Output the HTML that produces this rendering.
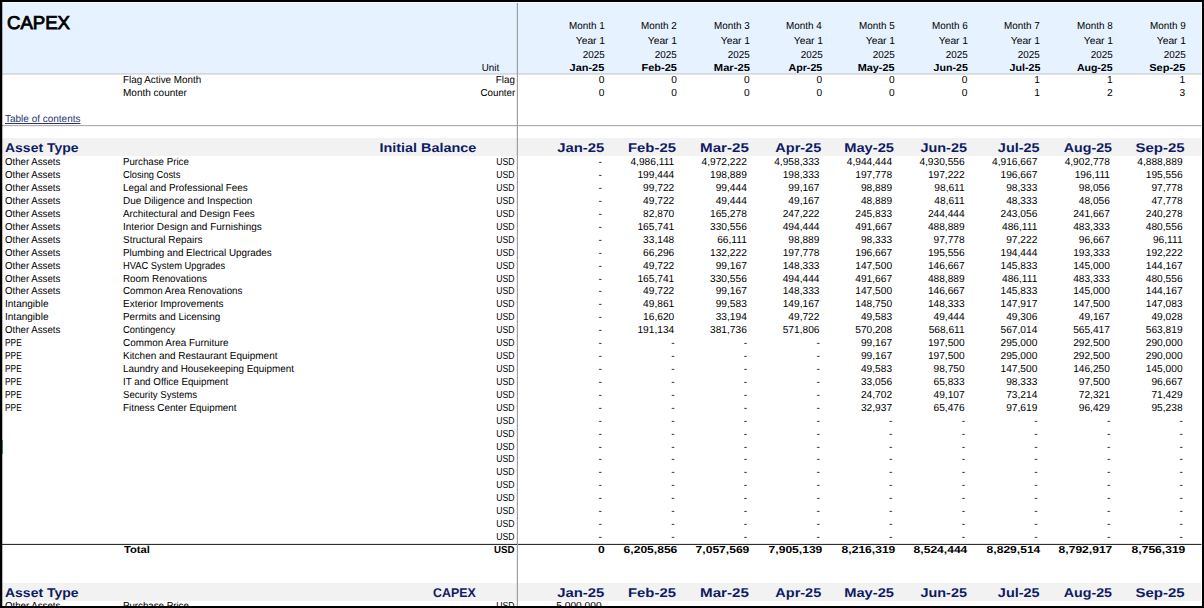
<!DOCTYPE html>
<html lang="en">
<head>
<meta charset="utf-8">
<title>CAPEX</title>
<style>
html,body{margin:0;padding:0;background:#fff;}
body{width:1204px;height:608px;position:relative;overflow:hidden;font-family:"Liberation Sans",sans-serif;color:#000;}
#sheet{position:absolute;left:0;top:0;width:1204px;height:608px;overflow:hidden;background:#fff;}
.hdr{position:absolute;left:2px;top:2px;width:1200px;height:71px;background:#e6f2ff;border-bottom:1px solid #d3d8de;}
.hdr2{position:absolute;left:2px;top:74px;width:1200px;height:1px;background:#e4e4e2;}
.band{position:absolute;left:2px;width:1200px;background:#f2f2f2;}
.vline{position:absolute;left:517px;top:2px;width:1px;height:604px;background:#a0a0a0;box-shadow:-1px 0 0 rgba(0,0,0,0.07);}
.hline{position:absolute;left:2px;top:125px;width:1200px;height:1px;background:#acacac;box-shadow:0 1px 0 rgba(0,0,0,0.05);}
.tline{position:absolute;left:2px;top:544px;width:1200px;height:1px;background:#303030;box-shadow:0 -1px 0 rgba(0,0,0,0.09);}
.bt,.bb,.bl,.br{position:absolute;background:#000;}
.bt{left:0;top:0;width:1204px;height:2px;}
.bb{left:0;top:606px;width:1204px;height:2px;}
.bl{left:0;top:0;width:2px;height:608px;}
.br{left:1202px;top:0;width:2px;height:608px;}
.bl2{position:absolute;left:2px;top:2px;width:1px;height:604px;background:rgba(0,0,0,0.27);}
.bt2{position:absolute;left:2px;top:2px;width:1200px;height:1px;background:#f2fbff;}
.br2{position:absolute;left:1201px;top:2px;width:1px;height:604px;background:rgba(255,255,255,0.55);}
.sel{position:absolute;left:2px;top:440px;width:1px;height:14px;background:#2a8757;}
.t{position:absolute;white-space:nowrap;height:13px;line-height:13px;font-size:10.2px;text-rendering:geometricPrecision;}
.l{transform-origin:left center;}
.r{transform-origin:right center;text-align:right;}
.n{transform:scaleX(1.0);}
.x{transform:scaleX(0.96);}
.u{transform:scaleX(0.85);}
.ub{font-weight:bold;transform:scaleX(0.953);}
.nb{font-weight:bold;transform:scaleX(1.185);}
.tb{font-weight:bold;transform:scaleX(1.016);}
.h{transform:scaleX(0.97);}
.hy{transform:scaleX(1.007);}
.hb{font-weight:bold;transform:scaleX(1.075);}
.s{font-size:12.7px;font-weight:bold;color:#0d1a64;height:17px;line-height:17px;transform:scaleX(1.17);}
.st{transform:scaleX(1.115);}
.ttl{font-size:18.5px;height:24px;line-height:24px;-webkit-text-stroke:0.85px #000;}
.lnk{color:#27356f;text-decoration:underline;}
</style>
</head>
<body>
<div id="sheet">
<div class="hdr"></div><div class="hdr2"></div>
<div class="band" style="top:138px;height:18px"></div>
<div class="band" style="top:583px;height:18px"></div>

<div class="t l ttl" style="left:6.97px;top:11.4px;transform:scaleX(1.0047)">CAPEX</div>
<div class="t r x" style="right:704.7px;top:62px">Unit</div>
<div class="t r h" style="right:599.6px;top:19.5px">Month 1</div>
<div class="t r h hy" style="right:599.2px;top:34.7px">Year 1</div>
<div class="t r h" style="right:599.6px;top:48.5px">2025</div>
<div class="t r hb" style="right:599.6px;top:61.5px;transform:scaleX(1.0750)">Jan-25</div>
<div class="t r h" style="right:526.98px;top:19.5px">Month 2</div>
<div class="t r h hy" style="right:526.58px;top:34.7px">Year 1</div>
<div class="t r h" style="right:526.98px;top:48.5px">2025</div>
<div class="t r hb" style="right:526.98px;top:61.5px;transform:scaleX(1.0750)">Feb-25</div>
<div class="t r h" style="right:454.36px;top:19.5px">Month 3</div>
<div class="t r h hy" style="right:453.96px;top:34.7px">Year 1</div>
<div class="t r h" style="right:454.36px;top:48.5px">2025</div>
<div class="t r hb" style="right:454.36px;top:61.5px;transform:scaleX(1.0965)">Mar-25</div>
<div class="t r h" style="right:381.74px;top:19.5px">Month 4</div>
<div class="t r h hy" style="right:381.34px;top:34.7px">Year 1</div>
<div class="t r h" style="right:381.74px;top:48.5px">2025</div>
<div class="t r hb" style="right:381.74px;top:61.5px;transform:scaleX(1.0481)">Apr-25</div>
<div class="t r h" style="right:309.12px;top:19.5px">Month 5</div>
<div class="t r h hy" style="right:308.72px;top:34.7px">Year 1</div>
<div class="t r h" style="right:309.12px;top:48.5px">2025</div>
<div class="t r hb" style="right:309.12px;top:61.5px;transform:scaleX(1.0642)">May-25</div>
<div class="t r h" style="right:236.5px;top:19.5px">Month 6</div>
<div class="t r h hy" style="right:236.1px;top:34.7px">Year 1</div>
<div class="t r h" style="right:236.5px;top:48.5px">2025</div>
<div class="t r hb" style="right:236.5px;top:61.5px;transform:scaleX(1.0427)">Jun-25</div>
<div class="t r h" style="right:163.88px;top:19.5px">Month 7</div>
<div class="t r h hy" style="right:163.48px;top:34.7px">Year 1</div>
<div class="t r h" style="right:163.88px;top:48.5px">2025</div>
<div class="t r hb" style="right:163.88px;top:61.5px;transform:scaleX(1.0481)">Jul-25</div>
<div class="t r h" style="right:91.26px;top:19.5px">Month 8</div>
<div class="t r h hy" style="right:90.86px;top:34.7px">Year 1</div>
<div class="t r h" style="right:91.26px;top:48.5px">2025</div>
<div class="t r hb" style="right:91.26px;top:61.5px;transform:scaleX(1.0320)">Aug-25</div>
<div class="t r h" style="right:18.64px;top:19.5px">Month 9</div>
<div class="t r h hy" style="right:18.24px;top:34.7px">Year 1</div>
<div class="t r h" style="right:18.64px;top:48.5px">2025</div>
<div class="t r hb" style="right:18.64px;top:61.5px;transform:scaleX(1.0857)">Sep-25</div>
<div class="t l " style="left:123.01px;top:73.5px;transform:scaleX(0.9647)">Flag Active Month</div>
<div class="t r x" style="right:689px;top:73.5px">Flag</div>
<div class="t l " style="left:123px;top:86.5px;transform:scaleX(0.9819)">Month counter</div>
<div class="t r x" style="right:689px;top:86.5px">Counter</div>
<div class="t r n" style="right:599.7px;top:73.5px">0</div>
<div class="t r n" style="right:599.7px;top:86.5px">0</div>
<div class="t r n" style="right:527.08px;top:73.5px">0</div>
<div class="t r n" style="right:527.08px;top:86.5px">0</div>
<div class="t r n" style="right:454.46px;top:73.5px">0</div>
<div class="t r n" style="right:454.46px;top:86.5px">0</div>
<div class="t r n" style="right:381.84px;top:73.5px">0</div>
<div class="t r n" style="right:381.84px;top:86.5px">0</div>
<div class="t r n" style="right:309.22px;top:73.5px">0</div>
<div class="t r n" style="right:309.22px;top:86.5px">0</div>
<div class="t r n" style="right:236.6px;top:73.5px">0</div>
<div class="t r n" style="right:236.6px;top:86.5px">0</div>
<div class="t r n" style="right:163.98px;top:73.5px">1</div>
<div class="t r n" style="right:163.98px;top:86.5px">1</div>
<div class="t r n" style="right:91.36px;top:73.5px">1</div>
<div class="t r n" style="right:91.36px;top:86.5px">2</div>
<div class="t r n" style="right:18.74px;top:73.5px">1</div>
<div class="t r n" style="right:18.74px;top:86.5px">3</div>
<div class="t l lnk" style="left:4.8px;top:113px;transform:scaleX(0.9797)">Table of contents</div>
<div class="t l s" style="left:5.25px;top:139.6px;transform:scaleX(1.1013)">Asset Type</div>
<div class="t r s" style="right:727.47px;top:139.6px;transform:scaleX(1.1354)">Initial Balance</div>
<div class="t r s" style="right:600.3px;top:139.6px;transform:scaleX(1.1700)">Jan-25</div>
<div class="t r s" style="right:527.68px;top:139.6px;transform:scaleX(1.1700)">Feb-25</div>
<div class="t r s" style="right:455.06px;top:139.6px;transform:scaleX(1.1934)">Mar-25</div>
<div class="t r s" style="right:382.44px;top:139.6px;transform:scaleX(1.1407)">Apr-25</div>
<div class="t r s" style="right:309.82px;top:139.6px;transform:scaleX(1.1583)">May-25</div>
<div class="t r s" style="right:237.2px;top:139.6px;transform:scaleX(1.1349)">Jun-25</div>
<div class="t r s" style="right:164.58px;top:139.6px;transform:scaleX(1.1407)">Jul-25</div>
<div class="t r s" style="right:91.96px;top:139.6px;transform:scaleX(1.1232)">Aug-25</div>
<div class="t r s" style="right:19.34px;top:139.6px;transform:scaleX(1.1817)">Sep-25</div>
<div class="t l " style="left:4.66px;top:156.2px;transform:scaleX(0.9483)">Other Assets</div>
<div class="t l " style="left:123.12px;top:156.2px;transform:scaleX(0.9524)">Purchase Price</div>
<div class="t r u" style="right:689px;top:156.2px">USD</div>
<div class="t r n" style="right:602px;top:156.2px">-</div>
<div class="t r n" style="right:529.78px;top:156.2px">4,986,111</div>
<div class="t r n" style="right:457.16px;top:156.2px">4,972,222</div>
<div class="t r n" style="right:384.54px;top:156.2px">4,958,333</div>
<div class="t r n" style="right:311.92px;top:156.2px">4,944,444</div>
<div class="t r n" style="right:239.3px;top:156.2px">4,930,556</div>
<div class="t r n" style="right:166.68px;top:156.2px">4,916,667</div>
<div class="t r n" style="right:94.06px;top:156.2px">4,902,778</div>
<div class="t r n" style="right:21.44px;top:156.2px">4,888,889</div>
<div class="t l " style="left:4.66px;top:169.12px;transform:scaleX(0.9483)">Other Assets</div>
<div class="t l " style="left:123.43px;top:169.12px;transform:scaleX(0.9119)">Closing Costs</div>
<div class="t r u" style="right:689px;top:169.12px">USD</div>
<div class="t r n" style="right:602px;top:169.12px">-</div>
<div class="t r n" style="right:529.78px;top:169.12px">199,444</div>
<div class="t r n" style="right:457.16px;top:169.12px">198,889</div>
<div class="t r n" style="right:384.54px;top:169.12px">198,333</div>
<div class="t r n" style="right:311.92px;top:169.12px">197,778</div>
<div class="t r n" style="right:239.3px;top:169.12px">197,222</div>
<div class="t r n" style="right:166.68px;top:169.12px">196,667</div>
<div class="t r n" style="right:94.06px;top:169.12px">196,111</div>
<div class="t r n" style="right:21.44px;top:169.12px">195,556</div>
<div class="t l " style="left:4.66px;top:182.05px;transform:scaleX(0.9483)">Other Assets</div>
<div class="t l " style="left:123.11px;top:182.05px;transform:scaleX(0.9656)">Legal and Professional Fees</div>
<div class="t r u" style="right:689px;top:182.05px">USD</div>
<div class="t r n" style="right:602px;top:182.05px">-</div>
<div class="t r n" style="right:529.78px;top:182.05px">99,722</div>
<div class="t r n" style="right:457.16px;top:182.05px">99,444</div>
<div class="t r n" style="right:384.54px;top:182.05px">99,167</div>
<div class="t r n" style="right:311.92px;top:182.05px">98,889</div>
<div class="t r n" style="right:239.3px;top:182.05px">98,611</div>
<div class="t r n" style="right:166.68px;top:182.05px">98,333</div>
<div class="t r n" style="right:94.06px;top:182.05px">98,056</div>
<div class="t r n" style="right:21.44px;top:182.05px">97,778</div>
<div class="t l " style="left:4.66px;top:194.97px;transform:scaleX(0.9483)">Other Assets</div>
<div class="t l " style="left:123.1px;top:194.97px;transform:scaleX(0.9754)">Due Diligence and Inspection</div>
<div class="t r u" style="right:689px;top:194.97px">USD</div>
<div class="t r n" style="right:602px;top:194.97px">-</div>
<div class="t r n" style="right:529.78px;top:194.97px">49,722</div>
<div class="t r n" style="right:457.16px;top:194.97px">49,444</div>
<div class="t r n" style="right:384.54px;top:194.97px">49,167</div>
<div class="t r n" style="right:311.92px;top:194.97px">48,889</div>
<div class="t r n" style="right:239.3px;top:194.97px">48,611</div>
<div class="t r n" style="right:166.68px;top:194.97px">48,333</div>
<div class="t r n" style="right:94.06px;top:194.97px">48,056</div>
<div class="t r n" style="right:21.44px;top:194.97px">47,778</div>
<div class="t l " style="left:4.66px;top:207.9px;transform:scaleX(0.9483)">Other Assets</div>
<div class="t l " style="left:123.3px;top:207.9px;transform:scaleX(0.9657)">Architectural and Design Fees</div>
<div class="t r u" style="right:689px;top:207.9px">USD</div>
<div class="t r n" style="right:602px;top:207.9px">-</div>
<div class="t r n" style="right:529.78px;top:207.9px">82,870</div>
<div class="t r n" style="right:457.16px;top:207.9px">165,278</div>
<div class="t r n" style="right:384.54px;top:207.9px">247,222</div>
<div class="t r n" style="right:311.92px;top:207.9px">245,833</div>
<div class="t r n" style="right:239.3px;top:207.9px">244,444</div>
<div class="t r n" style="right:166.68px;top:207.9px">243,056</div>
<div class="t r n" style="right:94.06px;top:207.9px">241,667</div>
<div class="t r n" style="right:21.44px;top:207.9px">240,278</div>
<div class="t l " style="left:4.66px;top:220.82px;transform:scaleX(0.9483)">Other Assets</div>
<div class="t l " style="left:123px;top:220.82px;transform:scaleX(0.9804)">Interior Design and Furnishings</div>
<div class="t r u" style="right:689px;top:220.82px">USD</div>
<div class="t r n" style="right:602px;top:220.82px">-</div>
<div class="t r n" style="right:529.78px;top:220.82px">165,741</div>
<div class="t r n" style="right:457.16px;top:220.82px">330,556</div>
<div class="t r n" style="right:384.54px;top:220.82px">494,444</div>
<div class="t r n" style="right:311.92px;top:220.82px">491,667</div>
<div class="t r n" style="right:239.3px;top:220.82px">488,889</div>
<div class="t r n" style="right:166.68px;top:220.82px">486,111</div>
<div class="t r n" style="right:94.06px;top:220.82px">483,333</div>
<div class="t r n" style="right:21.44px;top:220.82px">480,556</div>
<div class="t l " style="left:4.66px;top:233.75px;transform:scaleX(0.9483)">Other Assets</div>
<div class="t l " style="left:123.45px;top:233.75px;transform:scaleX(0.9761)">Structural Repairs</div>
<div class="t r u" style="right:689px;top:233.75px">USD</div>
<div class="t r n" style="right:602px;top:233.75px">-</div>
<div class="t r n" style="right:529.78px;top:233.75px">33,148</div>
<div class="t r n" style="right:457.16px;top:233.75px">66,111</div>
<div class="t r n" style="right:384.54px;top:233.75px">98,889</div>
<div class="t r n" style="right:311.92px;top:233.75px">98,333</div>
<div class="t r n" style="right:239.3px;top:233.75px">97,778</div>
<div class="t r n" style="right:166.68px;top:233.75px">97,222</div>
<div class="t r n" style="right:94.06px;top:233.75px">96,667</div>
<div class="t r n" style="right:21.44px;top:233.75px">96,111</div>
<div class="t l " style="left:4.66px;top:246.68px;transform:scaleX(0.9483)">Other Assets</div>
<div class="t l " style="left:123.11px;top:246.68px;transform:scaleX(0.9692)">Plumbing and Electrical Upgrades</div>
<div class="t r u" style="right:689px;top:246.68px">USD</div>
<div class="t r n" style="right:602px;top:246.68px">-</div>
<div class="t r n" style="right:529.78px;top:246.68px">66,296</div>
<div class="t r n" style="right:457.16px;top:246.68px">132,222</div>
<div class="t r n" style="right:384.54px;top:246.68px">197,778</div>
<div class="t r n" style="right:311.92px;top:246.68px">196,667</div>
<div class="t r n" style="right:239.3px;top:246.68px">195,556</div>
<div class="t r n" style="right:166.68px;top:246.68px">194,444</div>
<div class="t r n" style="right:94.06px;top:246.68px">193,333</div>
<div class="t r n" style="right:21.44px;top:246.68px">192,222</div>
<div class="t l " style="left:4.66px;top:259.6px;transform:scaleX(0.9483)">Other Assets</div>
<div class="t l " style="left:123.15px;top:259.6px;transform:scaleX(0.9174)">HVAC System Upgrades</div>
<div class="t r u" style="right:689px;top:259.6px">USD</div>
<div class="t r n" style="right:602px;top:259.6px">-</div>
<div class="t r n" style="right:529.78px;top:259.6px">49,722</div>
<div class="t r n" style="right:457.16px;top:259.6px">99,167</div>
<div class="t r n" style="right:384.54px;top:259.6px">148,333</div>
<div class="t r n" style="right:311.92px;top:259.6px">147,500</div>
<div class="t r n" style="right:239.3px;top:259.6px">146,667</div>
<div class="t r n" style="right:166.68px;top:259.6px">145,833</div>
<div class="t r n" style="right:94.06px;top:259.6px">145,000</div>
<div class="t r n" style="right:21.44px;top:259.6px">144,167</div>
<div class="t l " style="left:4.66px;top:272.52px;transform:scaleX(0.9483)">Other Assets</div>
<div class="t l " style="left:123.11px;top:272.52px;transform:scaleX(0.9675)">Room Renovations</div>
<div class="t r u" style="right:689px;top:272.52px">USD</div>
<div class="t r n" style="right:602px;top:272.52px">-</div>
<div class="t r n" style="right:529.78px;top:272.52px">165,741</div>
<div class="t r n" style="right:457.16px;top:272.52px">330,556</div>
<div class="t r n" style="right:384.54px;top:272.52px">494,444</div>
<div class="t r n" style="right:311.92px;top:272.52px">491,667</div>
<div class="t r n" style="right:239.3px;top:272.52px">488,889</div>
<div class="t r n" style="right:166.68px;top:272.52px">486,111</div>
<div class="t r n" style="right:94.06px;top:272.52px">483,333</div>
<div class="t r n" style="right:21.44px;top:272.52px">480,556</div>
<div class="t l " style="left:4.66px;top:285.45px;transform:scaleX(0.9483)">Other Assets</div>
<div class="t l " style="left:123.41px;top:285.45px;transform:scaleX(0.9582)">Common Area Renovations</div>
<div class="t r u" style="right:689px;top:285.45px">USD</div>
<div class="t r n" style="right:602px;top:285.45px">-</div>
<div class="t r n" style="right:529.78px;top:285.45px">49,722</div>
<div class="t r n" style="right:457.16px;top:285.45px">99,167</div>
<div class="t r n" style="right:384.54px;top:285.45px">148,333</div>
<div class="t r n" style="right:311.92px;top:285.45px">147,500</div>
<div class="t r n" style="right:239.3px;top:285.45px">146,667</div>
<div class="t r n" style="right:166.68px;top:285.45px">145,833</div>
<div class="t r n" style="right:94.06px;top:285.45px">145,000</div>
<div class="t r n" style="right:21.44px;top:285.45px">144,167</div>
<div class="t l " style="left:5px;top:298.38px;transform:scaleX(0.9839)">Intangible</div>
<div class="t l " style="left:123.1px;top:298.38px;transform:scaleX(0.9819)">Exterior Improvements</div>
<div class="t r u" style="right:689px;top:298.38px">USD</div>
<div class="t r n" style="right:602px;top:298.38px">-</div>
<div class="t r n" style="right:529.78px;top:298.38px">49,861</div>
<div class="t r n" style="right:457.16px;top:298.38px">99,583</div>
<div class="t r n" style="right:384.54px;top:298.38px">149,167</div>
<div class="t r n" style="right:311.92px;top:298.38px">148,750</div>
<div class="t r n" style="right:239.3px;top:298.38px">148,333</div>
<div class="t r n" style="right:166.68px;top:298.38px">147,917</div>
<div class="t r n" style="right:94.06px;top:298.38px">147,500</div>
<div class="t r n" style="right:21.44px;top:298.38px">147,083</div>
<div class="t l " style="left:5px;top:311.3px;transform:scaleX(0.9839)">Intangible</div>
<div class="t l " style="left:123.11px;top:311.3px;transform:scaleX(0.9713)">Permits and Licensing</div>
<div class="t r u" style="right:689px;top:311.3px">USD</div>
<div class="t r n" style="right:602px;top:311.3px">-</div>
<div class="t r n" style="right:529.78px;top:311.3px">16,620</div>
<div class="t r n" style="right:457.16px;top:311.3px">33,194</div>
<div class="t r n" style="right:384.54px;top:311.3px">49,722</div>
<div class="t r n" style="right:311.92px;top:311.3px">49,583</div>
<div class="t r n" style="right:239.3px;top:311.3px">49,444</div>
<div class="t r n" style="right:166.68px;top:311.3px">49,306</div>
<div class="t r n" style="right:94.06px;top:311.3px">49,167</div>
<div class="t r n" style="right:21.44px;top:311.3px">49,028</div>
<div class="t l " style="left:4.66px;top:324.23px;transform:scaleX(0.9483)">Other Assets</div>
<div class="t l " style="left:123.43px;top:324.23px;transform:scaleX(0.9199)">Contingency</div>
<div class="t r u" style="right:689px;top:324.23px">USD</div>
<div class="t r n" style="right:602px;top:324.23px">-</div>
<div class="t r n" style="right:529.78px;top:324.23px">191,134</div>
<div class="t r n" style="right:457.16px;top:324.23px">381,736</div>
<div class="t r n" style="right:384.54px;top:324.23px">571,806</div>
<div class="t r n" style="right:311.92px;top:324.23px">570,208</div>
<div class="t r n" style="right:239.3px;top:324.23px">568,611</div>
<div class="t r n" style="right:166.68px;top:324.23px">567,014</div>
<div class="t r n" style="right:94.06px;top:324.23px">565,417</div>
<div class="t r n" style="right:21.44px;top:324.23px">563,819</div>
<div class="t l " style="left:5.03px;top:337.15px;transform:scaleX(0.8187)">PPE</div>
<div class="t l " style="left:123.4px;top:337.15px;transform:scaleX(0.9711)">Common Area Furniture</div>
<div class="t r u" style="right:689px;top:337.15px">USD</div>
<div class="t r n" style="right:602px;top:337.15px">-</div>
<div class="t r n" style="right:529.38px;top:337.15px">-</div>
<div class="t r n" style="right:456.76px;top:337.15px">-</div>
<div class="t r n" style="right:384.14px;top:337.15px">-</div>
<div class="t r n" style="right:311.92px;top:337.15px">99,167</div>
<div class="t r n" style="right:239.3px;top:337.15px">197,500</div>
<div class="t r n" style="right:166.68px;top:337.15px">295,000</div>
<div class="t r n" style="right:94.06px;top:337.15px">292,500</div>
<div class="t r n" style="right:21.44px;top:337.15px">290,000</div>
<div class="t l " style="left:5.03px;top:350.07px;transform:scaleX(0.8187)">PPE</div>
<div class="t l " style="left:123.1px;top:350.07px;transform:scaleX(0.9775)">Kitchen and Restaurant Equipment</div>
<div class="t r u" style="right:689px;top:350.07px">USD</div>
<div class="t r n" style="right:602px;top:350.07px">-</div>
<div class="t r n" style="right:529.38px;top:350.07px">-</div>
<div class="t r n" style="right:456.76px;top:350.07px">-</div>
<div class="t r n" style="right:384.14px;top:350.07px">-</div>
<div class="t r n" style="right:311.92px;top:350.07px">99,167</div>
<div class="t r n" style="right:239.3px;top:350.07px">197,500</div>
<div class="t r n" style="right:166.68px;top:350.07px">295,000</div>
<div class="t r n" style="right:94.06px;top:350.07px">292,500</div>
<div class="t r n" style="right:21.44px;top:350.07px">290,000</div>
<div class="t l " style="left:5.03px;top:363px;transform:scaleX(0.8187)">PPE</div>
<div class="t l " style="left:123.11px;top:363px;transform:scaleX(0.9707)">Laundry and Housekeeping Equipment</div>
<div class="t r u" style="right:689px;top:363px">USD</div>
<div class="t r n" style="right:602px;top:363px">-</div>
<div class="t r n" style="right:529.38px;top:363px">-</div>
<div class="t r n" style="right:456.76px;top:363px">-</div>
<div class="t r n" style="right:384.14px;top:363px">-</div>
<div class="t r n" style="right:311.92px;top:363px">49,583</div>
<div class="t r n" style="right:239.3px;top:363px">98,750</div>
<div class="t r n" style="right:166.68px;top:363px">147,500</div>
<div class="t r n" style="right:94.06px;top:363px">146,250</div>
<div class="t r n" style="right:21.44px;top:363px">145,000</div>
<div class="t l " style="left:5.03px;top:375.93px;transform:scaleX(0.8187)">PPE</div>
<div class="t l " style="left:123.02px;top:375.93px;transform:scaleX(0.9606)">IT and Office Equipment</div>
<div class="t r u" style="right:689px;top:375.93px">USD</div>
<div class="t r n" style="right:602px;top:375.93px">-</div>
<div class="t r n" style="right:529.38px;top:375.93px">-</div>
<div class="t r n" style="right:456.76px;top:375.93px">-</div>
<div class="t r n" style="right:384.14px;top:375.93px">-</div>
<div class="t r n" style="right:311.92px;top:375.93px">33,056</div>
<div class="t r n" style="right:239.3px;top:375.93px">65,833</div>
<div class="t r n" style="right:166.68px;top:375.93px">98,333</div>
<div class="t r n" style="right:94.06px;top:375.93px">97,500</div>
<div class="t r n" style="right:21.44px;top:375.93px">96,667</div>
<div class="t l " style="left:5.03px;top:388.85px;transform:scaleX(0.8187)">PPE</div>
<div class="t l " style="left:123.47px;top:388.85px;transform:scaleX(0.9413)">Security Systems</div>
<div class="t r u" style="right:689px;top:388.85px">USD</div>
<div class="t r n" style="right:602px;top:388.85px">-</div>
<div class="t r n" style="right:529.38px;top:388.85px">-</div>
<div class="t r n" style="right:456.76px;top:388.85px">-</div>
<div class="t r n" style="right:384.14px;top:388.85px">-</div>
<div class="t r n" style="right:311.92px;top:388.85px">24,702</div>
<div class="t r n" style="right:239.3px;top:388.85px">49,107</div>
<div class="t r n" style="right:166.68px;top:388.85px">73,214</div>
<div class="t r n" style="right:94.06px;top:388.85px">72,321</div>
<div class="t r n" style="right:21.44px;top:388.85px">71,429</div>
<div class="t l " style="left:5.03px;top:401.77px;transform:scaleX(0.8187)">PPE</div>
<div class="t l " style="left:123.11px;top:401.77px;transform:scaleX(0.9633)">Fitness Center Equipment</div>
<div class="t r u" style="right:689px;top:401.77px">USD</div>
<div class="t r n" style="right:602px;top:401.77px">-</div>
<div class="t r n" style="right:529.38px;top:401.77px">-</div>
<div class="t r n" style="right:456.76px;top:401.77px">-</div>
<div class="t r n" style="right:384.14px;top:401.77px">-</div>
<div class="t r n" style="right:311.92px;top:401.77px">32,937</div>
<div class="t r n" style="right:239.3px;top:401.77px">65,476</div>
<div class="t r n" style="right:166.68px;top:401.77px">97,619</div>
<div class="t r n" style="right:94.06px;top:401.77px">96,429</div>
<div class="t r n" style="right:21.44px;top:401.77px">95,238</div>
<div class="t r u" style="right:689px;top:414.7px">USD</div>
<div class="t r n" style="right:602px;top:414.7px">-</div>
<div class="t r n" style="right:529.38px;top:414.7px">-</div>
<div class="t r n" style="right:456.76px;top:414.7px">-</div>
<div class="t r n" style="right:384.14px;top:414.7px">-</div>
<div class="t r n" style="right:311.52px;top:414.7px">-</div>
<div class="t r n" style="right:238.9px;top:414.7px">-</div>
<div class="t r n" style="right:166.28px;top:414.7px">-</div>
<div class="t r n" style="right:93.66px;top:414.7px">-</div>
<div class="t r n" style="right:21.04px;top:414.7px">-</div>
<div class="t r u" style="right:689px;top:427.62px">USD</div>
<div class="t r n" style="right:602px;top:427.62px">-</div>
<div class="t r n" style="right:529.38px;top:427.62px">-</div>
<div class="t r n" style="right:456.76px;top:427.62px">-</div>
<div class="t r n" style="right:384.14px;top:427.62px">-</div>
<div class="t r n" style="right:311.52px;top:427.62px">-</div>
<div class="t r n" style="right:238.9px;top:427.62px">-</div>
<div class="t r n" style="right:166.28px;top:427.62px">-</div>
<div class="t r n" style="right:93.66px;top:427.62px">-</div>
<div class="t r n" style="right:21.04px;top:427.62px">-</div>
<div class="t r u" style="right:689px;top:440.55px">USD</div>
<div class="t r n" style="right:602px;top:440.55px">-</div>
<div class="t r n" style="right:529.38px;top:440.55px">-</div>
<div class="t r n" style="right:456.76px;top:440.55px">-</div>
<div class="t r n" style="right:384.14px;top:440.55px">-</div>
<div class="t r n" style="right:311.52px;top:440.55px">-</div>
<div class="t r n" style="right:238.9px;top:440.55px">-</div>
<div class="t r n" style="right:166.28px;top:440.55px">-</div>
<div class="t r n" style="right:93.66px;top:440.55px">-</div>
<div class="t r n" style="right:21.04px;top:440.55px">-</div>
<div class="t r u" style="right:689px;top:453.48px">USD</div>
<div class="t r n" style="right:602px;top:453.48px">-</div>
<div class="t r n" style="right:529.38px;top:453.48px">-</div>
<div class="t r n" style="right:456.76px;top:453.48px">-</div>
<div class="t r n" style="right:384.14px;top:453.48px">-</div>
<div class="t r n" style="right:311.52px;top:453.48px">-</div>
<div class="t r n" style="right:238.9px;top:453.48px">-</div>
<div class="t r n" style="right:166.28px;top:453.48px">-</div>
<div class="t r n" style="right:93.66px;top:453.48px">-</div>
<div class="t r n" style="right:21.04px;top:453.48px">-</div>
<div class="t r u" style="right:689px;top:466.4px">USD</div>
<div class="t r n" style="right:602px;top:466.4px">-</div>
<div class="t r n" style="right:529.38px;top:466.4px">-</div>
<div class="t r n" style="right:456.76px;top:466.4px">-</div>
<div class="t r n" style="right:384.14px;top:466.4px">-</div>
<div class="t r n" style="right:311.52px;top:466.4px">-</div>
<div class="t r n" style="right:238.9px;top:466.4px">-</div>
<div class="t r n" style="right:166.28px;top:466.4px">-</div>
<div class="t r n" style="right:93.66px;top:466.4px">-</div>
<div class="t r n" style="right:21.04px;top:466.4px">-</div>
<div class="t r u" style="right:689px;top:479.32px">USD</div>
<div class="t r n" style="right:602px;top:479.32px">-</div>
<div class="t r n" style="right:529.38px;top:479.32px">-</div>
<div class="t r n" style="right:456.76px;top:479.32px">-</div>
<div class="t r n" style="right:384.14px;top:479.32px">-</div>
<div class="t r n" style="right:311.52px;top:479.32px">-</div>
<div class="t r n" style="right:238.9px;top:479.32px">-</div>
<div class="t r n" style="right:166.28px;top:479.32px">-</div>
<div class="t r n" style="right:93.66px;top:479.32px">-</div>
<div class="t r n" style="right:21.04px;top:479.32px">-</div>
<div class="t r u" style="right:689px;top:492.25px">USD</div>
<div class="t r n" style="right:602px;top:492.25px">-</div>
<div class="t r n" style="right:529.38px;top:492.25px">-</div>
<div class="t r n" style="right:456.76px;top:492.25px">-</div>
<div class="t r n" style="right:384.14px;top:492.25px">-</div>
<div class="t r n" style="right:311.52px;top:492.25px">-</div>
<div class="t r n" style="right:238.9px;top:492.25px">-</div>
<div class="t r n" style="right:166.28px;top:492.25px">-</div>
<div class="t r n" style="right:93.66px;top:492.25px">-</div>
<div class="t r n" style="right:21.04px;top:492.25px">-</div>
<div class="t r u" style="right:689px;top:505.18px">USD</div>
<div class="t r n" style="right:602px;top:505.18px">-</div>
<div class="t r n" style="right:529.38px;top:505.18px">-</div>
<div class="t r n" style="right:456.76px;top:505.18px">-</div>
<div class="t r n" style="right:384.14px;top:505.18px">-</div>
<div class="t r n" style="right:311.52px;top:505.18px">-</div>
<div class="t r n" style="right:238.9px;top:505.18px">-</div>
<div class="t r n" style="right:166.28px;top:505.18px">-</div>
<div class="t r n" style="right:93.66px;top:505.18px">-</div>
<div class="t r n" style="right:21.04px;top:505.18px">-</div>
<div class="t r u" style="right:689px;top:518.1px">USD</div>
<div class="t r n" style="right:602px;top:518.1px">-</div>
<div class="t r n" style="right:529.38px;top:518.1px">-</div>
<div class="t r n" style="right:456.76px;top:518.1px">-</div>
<div class="t r n" style="right:384.14px;top:518.1px">-</div>
<div class="t r n" style="right:311.52px;top:518.1px">-</div>
<div class="t r n" style="right:238.9px;top:518.1px">-</div>
<div class="t r n" style="right:166.28px;top:518.1px">-</div>
<div class="t r n" style="right:93.66px;top:518.1px">-</div>
<div class="t r n" style="right:21.04px;top:518.1px">-</div>
<div class="t r u" style="right:689px;top:531.03px">USD</div>
<div class="t r n" style="right:602px;top:531.03px">-</div>
<div class="t r n" style="right:529.38px;top:531.03px">-</div>
<div class="t r n" style="right:456.76px;top:531.03px">-</div>
<div class="t r n" style="right:384.14px;top:531.03px">-</div>
<div class="t r n" style="right:311.52px;top:531.03px">-</div>
<div class="t r n" style="right:238.9px;top:531.03px">-</div>
<div class="t r n" style="right:166.28px;top:531.03px">-</div>
<div class="t r n" style="right:93.66px;top:531.03px">-</div>
<div class="t r n" style="right:21.04px;top:531.03px">-</div>
<div class="t l tb" style="left:123.69px;top:544px;transform:scaleX(1.1010)">Total</div>
<div class="t r ub" style="right:689.3px;top:544px">USD</div>
<div class="t r nb" style="right:599.6px;top:544px">0</div>
<div class="t r nb" style="right:526.98px;top:544px">6,205,856</div>
<div class="t r nb" style="right:454.36px;top:544px">7,057,569</div>
<div class="t r nb" style="right:381.74px;top:544px">7,905,139</div>
<div class="t r nb" style="right:309.12px;top:544px">8,216,319</div>
<div class="t r nb" style="right:236.5px;top:544px">8,524,444</div>
<div class="t r nb" style="right:163.88px;top:544px">8,829,514</div>
<div class="t r nb" style="right:91.26px;top:544px">8,792,917</div>
<div class="t r nb" style="right:18.64px;top:544px">8,756,319</div>
<div class="t l s" style="left:5.25px;top:584.6px;transform:scaleX(1.1013)">Asset Type</div>
<div class="t r s" style="right:727.93px;top:584.6px;transform:scaleX(0.9773)">CAPEX</div>
<div class="t r s" style="right:600.3px;top:584.6px;transform:scaleX(1.1700)">Jan-25</div>
<div class="t r s" style="right:527.68px;top:584.6px;transform:scaleX(1.1700)">Feb-25</div>
<div class="t r s" style="right:455.06px;top:584.6px;transform:scaleX(1.1934)">Mar-25</div>
<div class="t r s" style="right:382.44px;top:584.6px;transform:scaleX(1.1407)">Apr-25</div>
<div class="t r s" style="right:309.82px;top:584.6px;transform:scaleX(1.1583)">May-25</div>
<div class="t r s" style="right:237.2px;top:584.6px;transform:scaleX(1.1349)">Jun-25</div>
<div class="t r s" style="right:164.58px;top:584.6px;transform:scaleX(1.1407)">Jul-25</div>
<div class="t r s" style="right:91.96px;top:584.6px;transform:scaleX(1.1232)">Aug-25</div>
<div class="t r s" style="right:19.34px;top:584.6px;transform:scaleX(1.1817)">Sep-25</div>
<div class="t l " style="left:4.66px;top:600.3px;transform:scaleX(0.9483)">Other Assets</div>
<div class="t l " style="left:123.12px;top:600.3px;transform:scaleX(0.9524)">Purchase Price</div>
<div class="t r u" style="right:689px;top:600.3px">USD</div>
<div class="t r n" style="right:602.4px;top:600.3px">5,000,000</div>
<div class="hline"></div>
<div class="tline"></div>
<div class="vline"></div>
<div class="bt2"></div><div class="bl2"></div><div class="br2"></div>
<div class="sel"></div><div class="bt"></div><div class="bb"></div><div class="bl"></div><div class="br"></div>
</div>
</body>
</html>
